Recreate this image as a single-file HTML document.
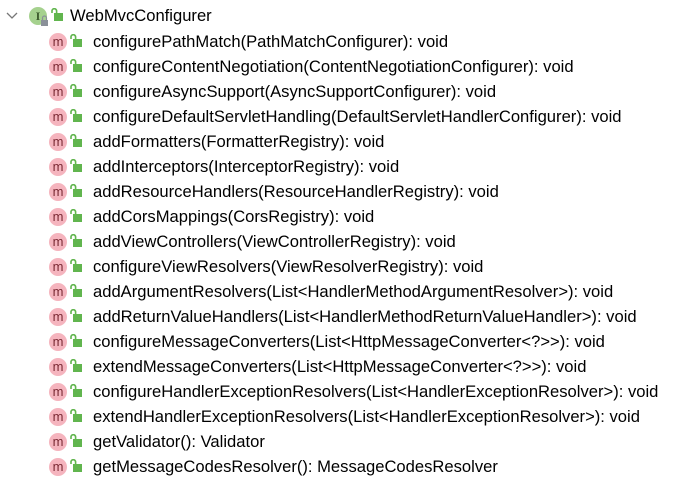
<!DOCTYPE html>
<html><head><meta charset="utf-8"><style>
body{margin:0;width:681px;height:498px;background:#fff;font-family:"Liberation Sans",Arial,sans-serif;font-size:16.6px;color:#000;position:relative;overflow:hidden}
.r{position:absolute;left:0;height:25px;width:681px}
.r svg{position:absolute}
.t{position:absolute;top:2px;white-space:pre;line-height:19px}
</style></head><body>
<div class="r" style="top:4px">
<svg style="left:6px;top:7px" width="12" height="10"><path d="M1 2 L6 7 L11 2" fill="none" stroke="#777" stroke-width="1.3"/></svg>
<svg style="left:28px;top:2px" width="22" height="22"><circle cx="10" cy="10" r="9" fill="#a5d18e"/><text x="10" y="14" font-size="12" font-weight="bold" text-anchor="middle" fill="#3c5a2c" font-family="Liberation Serif">I</text><rect x="13" y="14" width="7" height="6" fill="#8a9099"/><path d="M14.5 14 v-2 a2 2 0 0 1 4 0 v2" fill="none" stroke="#8a9099" stroke-width="1.2"/></svg>
<svg style="left:51px;top:4px" width="14" height="14"><rect x="3" y="5" width="9" height="8" fill="#61b54e"/><path d="M1 5 V3 a2.3 2.3 0 0 1 4.6 0 V5" fill="none" stroke="#61b54e" stroke-width="1.6"/></svg>
<div class="t" style="left:70px">WebMvcConfigurer</div>
</div>
<div id="rows"></div>
<script>
var m=["configurePathMatch(PathMatchConfigurer): void","configureContentNegotiation(ContentNegotiationConfigurer): void","configureAsyncSupport(AsyncSupportConfigurer): void","configureDefaultServletHandling(DefaultServletHandlerConfigurer): void","addFormatters(FormatterRegistry): void","addInterceptors(InterceptorRegistry): void","addResourceHandlers(ResourceHandlerRegistry): void","addCorsMappings(CorsRegistry): void","addViewControllers(ViewControllerRegistry): void","configureViewResolvers(ViewResolverRegistry): void","addArgumentResolvers(List<HandlerMethodArgumentResolver>): void","addReturnValueHandlers(List<HandlerMethodReturnValueHandler>): void","configureMessageConverters(List<HttpMessageConverter<?>>): void","extendMessageConverters(List<HttpMessageConverter<?>>): void","configureHandlerExceptionResolvers(List<HandlerExceptionResolver>): void","extendHandlerExceptionResolvers(List<HandlerExceptionResolver>): void","getValidator(): Validator","getMessageCodesResolver(): MessageCodesResolver"];
var h="";
m.forEach(function(s,i){var y=30+i*25;var e=s.replace(/&/g,"&amp;").replace(/</g,"&lt;").replace(/>/g,"&gt;");
h+='<div class="r" style="top:'+y+'px"><svg style="left:48px;top:2px" width="20" height="20"><circle cx="10" cy="10" r="9" fill="#f5b4be"/><text x="10" y="14" font-size="13" text-anchor="middle" fill="#7a2a35" font-family="Liberation Sans">m</text></svg><svg style="left:70px;top:4px" width="14" height="14"><rect x="3" y="5" width="9" height="8" fill="#61b54e"/><path d="M1 5 V3 a2.3 2.3 0 0 1 4.6 0 V5" fill="none" stroke="#61b54e" stroke-width="1.6"/></svg><div class="t" style="left:93px">'+e+'</div></div>';});
document.getElementById("rows").innerHTML=h;
</script>
</body></html>
